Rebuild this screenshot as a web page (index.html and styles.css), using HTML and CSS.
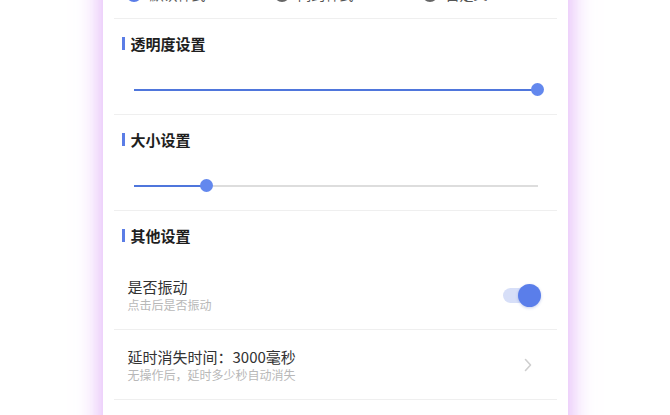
FILE: index.html
```html
<!DOCTYPE html>
<html lang="zh-CN">
<head>
  <meta charset="UTF-8" />
  <meta name="viewport" content="width=device-width, initial-scale=1.0"/>
  <title>悬浮球设置</title>
  <link rel="stylesheet" href="styles.css">
</head>
<body>
  <main class="card">
    <div class="style-row">
      <label class="option"><span class="radio checked"></span>默认样式</label>
      <label class="option"><span class="radio"></span>简约样式</label>
      <label class="option"><span class="radio"></span>自定义</label>
    </div>

    <section class="section">
      <div class="section-title">透明度设置</div>
      <div class="slider">
        <div class="track"><div class="fill" style="width: 100%;"></div></div>
        <span class="thumb"></span>
      </div>
    </section>

    <section class="section">
      <div class="section-title">大小设置</div>
      <div class="slider">
        <div class="track"><div class="fill" style="width: 18.3%;"></div></div>
        <span class="thumb" style="left: 18.3%;"></span>
      </div>
    </section>

    <section class="section last">
      <div class="section-title">其他设置</div>
      <div class="row">
        <div class="row-text">
          <div class="row-title">是否振动</div>
          <div class="row-sub">点击后是否振动</div>
        </div>
        <div class="switch on"><span class="knob"></span></div>
      </div>
      <div class="row">
        <div class="row-text">
          <div class="row-title">延时消失时间：3000毫秒</div>
          <div class="row-sub">无操作后，延时多少秒自动消失</div>
        </div>
        <svg class="chevron" width="8" height="14" viewBox="0 0 8 14">
          <path d="M1.5 1.5 L6.5 7 L1.5 12.5" fill="none" stroke="#cfcfcf" stroke-width="1.6" stroke-linecap="round" stroke-linejoin="round"/>
        </svg>
      </div>
      <div class="row">
        <div class="row-text">
          <div class="row-title">恢复默认设置</div>
          <div class="row-sub">将所有设置恢复为默认值</div>
        </div>
      </div>
    </section>
  </main>
</body>
</html>
```

FILE: styles.css
```css
body {
  margin: 0;
  background: #ffffff;
  font-family: "Noto Sans CJK SC", "Noto Sans", sans-serif;
  color: #222;
  overflow: hidden;
}
.card {
  width: 465px;
  margin: -26px auto 0;
  padding: 0 11px;
  box-sizing: border-box;
  background: #fff;
  box-shadow: 0 0 22px 3px rgba(214, 148, 245, 0.7);
}
.style-row {
  height: 40px;
  padding-bottom: 4px;
  display: grid;
  grid-template-columns: repeat(3, 148px);
  align-items: center;
  padding-left: 12px;
  border-bottom: 1px solid #efefef;
}
.option {
  display: flex;
  align-items: center;
  gap: 8px;
  font-size: 14px;
  color: #555;
}
.radio {
  width: 12px;
  height: 12px;
  border: 2px solid #666;
  border-radius: 50%;
}
.radio.checked {
  border-color: #5a7de8;
  background: #5a7de8;
}
.section {
  border-bottom: 1px solid #efefef;
}
.section.last {
  border-bottom: none;
}
.section-title {
  height: 49px;
  display: flex;
  align-items: center;
  padding-left: 8px;
  font-size: 15px;
  font-weight: bold;
  color: #1e1e1e;
}
.section-title::before {
  content: "";
  width: 3px;
  height: 13px;
  margin-right: 6px;
  background: #5b7de6;
}
.slider {
  position: relative;
  height: 44px;
  padding-bottom: 2px;
  margin: 0 19px 0 20px;
  display: flex;
  align-items: center;
}
.track {
  width: 100%;
  height: 2px;
  background: #dddddd;
}
.fill {
  height: 100%;
  background: #4f76dc;
}
.thumb {
  position: absolute;
  left: 100%;
  top: 15px;
  width: 13px;
  height: 13px;
  margin-left: -7px;
  border-radius: 50%;
  background: #6388ee;
}
.row {
  display: flex;
  align-items: center;
  padding: 17px 16px 16px 14px;
  border-bottom: 1px solid #efefef;
}
.row-text {
  flex: 1;
}
.row-title {
  font-size: 15px;
  line-height: 20px;
  color: #333;
}
.row-sub {
  font-size: 12px;
  line-height: 16px;
  color: #b8b8b8;
}
.switch {
  position: relative;
  width: 38px;
  height: 23px;
  display: flex;
  align-items: center;
}
.switch::before {
  content: "";
  width: 30px;
  height: 15px;
  border-radius: 8px;
  background: #d7dff8;
}
.knob {
  position: absolute;
  right: 0;
  top: 0;
  width: 23px;
  height: 23px;
  border-radius: 50%;
  background: #5a7eea;
  box-shadow: 0 1px 3px rgba(60, 90, 200, 0.3);
}
.chevron {
  margin-right: 9px;
}
```
